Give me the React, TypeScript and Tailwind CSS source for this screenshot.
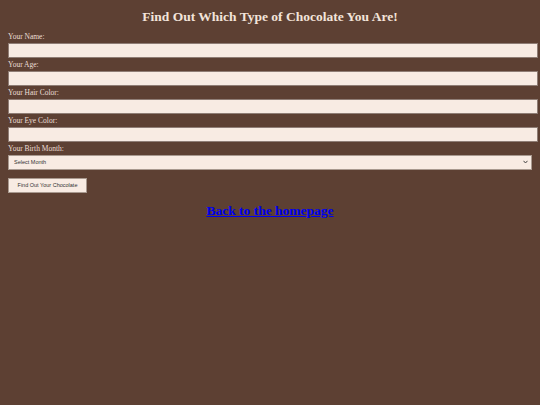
import React from 'react';

const fields = ['Your Name:', 'Your Age:', 'Your Hair Color:', 'Your Eye Color:'];

const months = [
  'January', 'February', 'March', 'April', 'May', 'June',
  'July', 'August', 'September', 'October', 'November', 'December',
];

export default function App() {
  return (
    <div className="min-h-screen overflow-hidden bg-[#5d4033] p-2 font-['Liberation_Serif',serif] text-[#f3e4da]">
      <h1 className="mb-[4px] text-center text-[13.5px] leading-[18px] font-bold">
        Find Out Which Type of Chocolate You Are!
      </h1>

      <form className="flex flex-col" onSubmit={(e) => e.preventDefault()}>
        {fields.map((label) => (
          <div key={label} className="flex flex-col">
            <label className="text-[7.5px] leading-[13px] text-[#ecdfd6]">{label}</label>
            <input
              type="text"
              className="box-content h-[13px] w-full border border-[#8f7d75] bg-[#f8ebe3] px-[2px]"
            />
          </div>
        ))}

        <label className="text-[7.5px] leading-[13px] text-[#ecdfd6]">Your Birth Month:</label>
        <div className="relative flex">
          <select className="h-[15px] w-full appearance-none border border-[#a8998f] bg-[#f8ebe3] pl-[5px] font-['Liberation_Sans',sans-serif] text-[5.5px] text-[#333] outline-none">
            <option>Select Month</option>
            {months.map((m) => (
              <option key={m}>{m}</option>
            ))}
          </select>
          <svg
            className="pointer-events-none absolute top-[5px] right-[4px] h-[4px] w-[5px]"
            viewBox="0 0 5 4"
          >
            <path d="M0.5 0.8 L2.5 3 L4.5 0.8" fill="none" stroke="#444" strokeWidth="1" />
          </svg>
        </div>

        <div className="mt-[8px] flex">
          <button
            type="submit"
            className="h-[15px] w-[79px] border border-[#a8998f] bg-[#f8ebe3] font-['Liberation_Sans',sans-serif] text-[5.5px] leading-none text-[#333]"
          >
            Find Out Your Chocolate
          </button>
        </div>
      </form>

      <div className="mt-[8px] text-center leading-[18px]">
        <a href="#" className="text-[13.5px] leading-[18px] font-bold text-[#0000ee] underline">
          Back to the homepage
        </a>
      </div>
    </div>
  );
}
